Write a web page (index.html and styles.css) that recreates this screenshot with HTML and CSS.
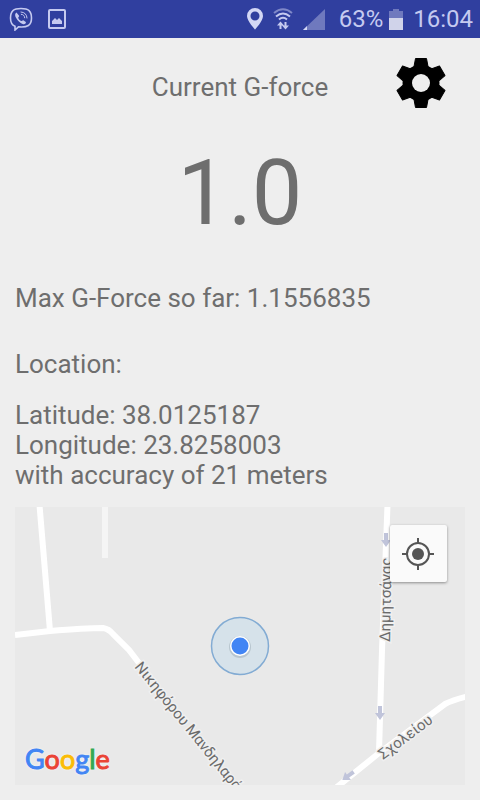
FILE: index.html
```html
<!DOCTYPE html>
<html lang="en">
<head>
    <meta charset="UTF-8">
    <meta name="viewport" content="width=device-width, initial-scale=1.0">
    <title>G-force</title>
    <link rel="stylesheet" href="styles.css">
</head>
<body>
    <div class="status-bar">
        <div class="status-left">
            <svg width="24" height="24" viewBox="0 0 24 24" fill="none" stroke="#c5caf0" stroke-linecap="round">
                <path d="M12 1.5c-7.500 0-10.500 2.500-10.500 9.500 0 4.500 1.300 7 4.500 8.200v3.800l3.500-3.200c9 .8 13-1.300 13-8.800 0-7-3-9.500-10.500-9.500z" stroke-width="1.600"/>
                <path d="M7.500 5.500c-1.800 1.300-1.700 3-.5 5.200 1.800 3.300 4.200 5.500 7.200 6.500 1.600.5 3.300-1.500 2.600-2.300l-2.500-1.700c-.8-.3-1.300 1-2 .9-1.500-.5-2.800-1.900-3.100-3.400 0-.7 1.300-1 .9-1.900z" fill="#c5caf0" stroke="none"/>
                <path d="M12 5c3.700.2 5.800 2.500 6 6M12.300 7.300c2.200.2 3.200 1.400 3.400 3.500" stroke-width="1"/>
            </svg>
            <svg width="18" height="20" viewBox="0 0 18 20">
                <rect x="1" y="1" width="16" height="18" rx="1" fill="none" stroke="#c5caf0" stroke-width="2"/>
                <path d="M4 15v-3l3-3 2 2 2-2 3 3v3z" fill="#c5caf0"/>
            </svg>
        </div>
        <div class="status-right">
            <svg width="16" height="22" viewBox="0 0 16 22">
                <path d="M8 0a8 8 0 0 0-8 8c0 5 8 13.500 8 13.500s8-8.500 8-13.500a8 8 0 0 0-8-8zm0 3.500a4.500 4.500 0 1 1 0 9 4.500 4.500 0 0 1 0-9z" fill="#d3d7f5" fill-rule="evenodd"/>
            </svg>
            <svg width="20" height="22" viewBox="0 0 20 22" fill="none" stroke="#c5caf0" stroke-width="2">
                <path d="M1 5q9-7.500 18 0" stroke="#7f88c8"/>
                <path d="M3 8.500q7-6 14 0M6 11.500q4-3.500 8 0"/>
                <path d="M7.500 21v-6M12.500 14v6"/>
                <path d="M4 17.500l3.500-4 3.500 4zM9 17.500l3.500 4 3.500-4z" fill="#c5caf0" stroke="none"/>
            </svg>
            <svg width="22" height="21" viewBox="0 0 22 21">
                <path d="M22 0v21H0z" fill="#6f79be"/>
                <path d="M4 17v4H0z" fill="#d3d7f5"/>
            </svg>
            <span class="battery-level">63%</span>
            <svg width="14" height="21" viewBox="0 0 14 21">
                <path d="M4 0h6v2h4v7H0V2h4z" fill="#6f79be"/>
                <path d="M0 9h14v12H0z" fill="#d0d3ea"/>
            </svg>
            <span class="clock">16:04</span>
        </div>
    </div>

    <main class="content">
        <header class="header">
            <h1>Current G-force</h1>
            <button class="settings" type="button" aria-label="Settings">
                <svg width="52" height="52" viewBox="-26 -26 52 52">
                    <defs>
                        <path id="teeth" d="M-5.500-24.500h11l1.500 8v33l-1.500 8h-11l-1.500-8v-33z" stroke="#000" stroke-width="1" stroke-linejoin="round"/>
                    </defs>
                    <circle r="18.500"/>
                    <use href="#teeth"/>
                    <use href="#teeth" transform="rotate(60)"/>
                    <use href="#teeth" transform="rotate(120)"/>
                    <circle r="9" fill="#eee"/>
                </svg>
            </button>
        </header>

        <div class="current">1.0</div>
        <p class="max">Max G-Force so far: 1.1556835</p>
        <h2>Location:</h2>
        <p class="position">
            Latitude: 38.0125187<br>
            Longitude: 23.8258003<br>
            with accuracy of 21 meters
        </p>

        <div class="map">
            <svg class="map-canvas" viewBox="0 0 450 278" preserveAspectRatio="xMidYMid slice">
                <defs>
                    <path id="arrow" d="M-2-7h4v7h3l-5 7-5-7h3z" fill="#c0c4da"/>
                </defs>
                <!-- roads -->
                <g class="roads">
                    <path class="minor" d="M90 0V51"/>
                    <path d="M24.500-2L35 124"/>
                    <path d="M0 128L35 124Q70 121 88 121Q94 122 98 127L114 143L124 156"/>
                    <path d="M372.500-2L367 143L364 245"/>
                    <path d="M452 189.500Q438 193 430 197L364 246L317 284"/>
                </g>
                <use href="#arrow" transform="translate(371 33)"/>
                <use href="#arrow" transform="translate(365 206)"/>
                <use href="#arrow" transform="translate(333 269) rotate(54)"/>
                <!-- street names -->
                <g class="streets">
                    <text transform="translate(375 135) rotate(-89)">Δημητσάνας</text>
                    <text transform="translate(119 160) rotate(51)">Νικηφόρου Μανδηλαρά</text>
                    <text transform="translate(368 253) rotate(-37)">Σχολείου</text>
                </g>
                <!-- current position -->
                <circle cx="225" cy="139" r="28.500" fill="#d6e2ea" stroke="#82abd3" stroke-width="1.500"/>
                <circle cx="225" cy="140" r="11" fill="#b9c6cf"/>
                <circle cx="225" cy="139" r="10" fill="#fff"/>
                <circle cx="225" cy="139" r="8.500" fill="#4285f4"/>
            </svg>
            <button class="locate" type="button" aria-label="My location">
                <svg width="32" height="32" viewBox="-16 -16 32 32" fill="none" stroke="#555" stroke-width="2">
                    <circle r="11"/>
                    <circle r="6" fill="#555" stroke="none"/>
                    <path d="M0-16v5M0 11v5M-16 0h5M11 0h5"/>
                </svg>
            </button>
            <div class="logo"><span class="blue">G</span><span class="red">o</span><span class="yellow">o</span><span class="blue">g</span><span class="green">l</span><span class="red">e</span></div>
        </div>
    </main>
</body>
</html>
```
FILE: styles.css
```css
* {
    box-sizing: border-box;
}

body {
    display: flex;
    flex-direction: column;
    min-height: 100vh;
    margin: 0;
    background-color: #eee;
    color: #6e6e6e;
    font-family: Roboto, sans-serif;
    font-size: 26px;
    line-height: 30px;
}

h1,
h2,
p {
    margin: 0;
    font-size: 26px;
    font-weight: 400;
}

button {
    padding: 0;
    border: none;
    cursor: pointer;
}

svg {
    display: block;
}

.status-bar {
    display: flex;
    justify-content: space-between;
    align-items: center;
    height: 38px;
    padding: 0 7px 0 9px;
    background-color: #303f9f;
    color: #c5caf0;
    font-size: 24px;
}

.status-left,
.status-right {
    display: flex;
    align-items: center;
}

.status-left {
    gap: 15px;
}

.status-right {
    gap: 10px;
}

.battery-level {
    margin-left: 4px;
    margin-right: -4px;
}

.content {
    display: flex;
    flex: 1;
    flex-direction: column;
    padding: 19px 15px 15px;
}

.header {
    display: grid;
    grid-template-columns: 1fr auto 1fr;
    align-items: center;
}

.header h1 {
    grid-column: 2;
    margin-top: 8px;
}

.settings {
    justify-self: end;
    margin-right: 18px;
    background: none;
}

.current {
    margin-top: 32px;
    font-size: 90px;
    line-height: 106px;
    text-align: center;
}

.max {
    margin-top: 36px;
}

.content h2 {
    margin-top: 36px;
}

.position {
    margin-top: 21px;
}

.map {
    position: relative;
    flex: 1;
    min-height: 200px;
    margin-top: 17px;
    overflow: hidden;
    background-color: #e9e9e9;
}

.map-canvas {
    position: absolute;
    width: 100%;
    height: 100%;
}

.roads path {
    fill: none;
    stroke: #fff;
    stroke-width: 6px;
}

.roads .minor {
    stroke: #f5f5f5;
}

.streets text {
    fill: #6b6b6b;
    stroke: #f0f0f0;
    stroke-width: 3px;
    paint-order: stroke;
    font-size: 15px;
}

.locate {
    position: absolute;
    top: 18px;
    right: 18px;
    display: flex;
    align-items: center;
    justify-content: center;
    width: 57px;
    height: 57px;
    padding-right: 1px;
    border-radius: 2px;
    background-color: #fafafa;
    box-shadow: 0 1px 3px rgba(0, 0, 0, 0.4);
}

.logo {
    position: absolute;
    left: 10px;
    bottom: 11px;
    font-family: Lato, sans-serif;
    font-size: 27px;
    -webkit-text-stroke: 1px;
    text-shadow: 0 0 3px #fff;
}

.blue {
    color: #4285f4;
}

.red {
    color: #ea4335;
}

.yellow {
    color: #fbbc05;
}

.green {
    color: #34a853;
}
```
